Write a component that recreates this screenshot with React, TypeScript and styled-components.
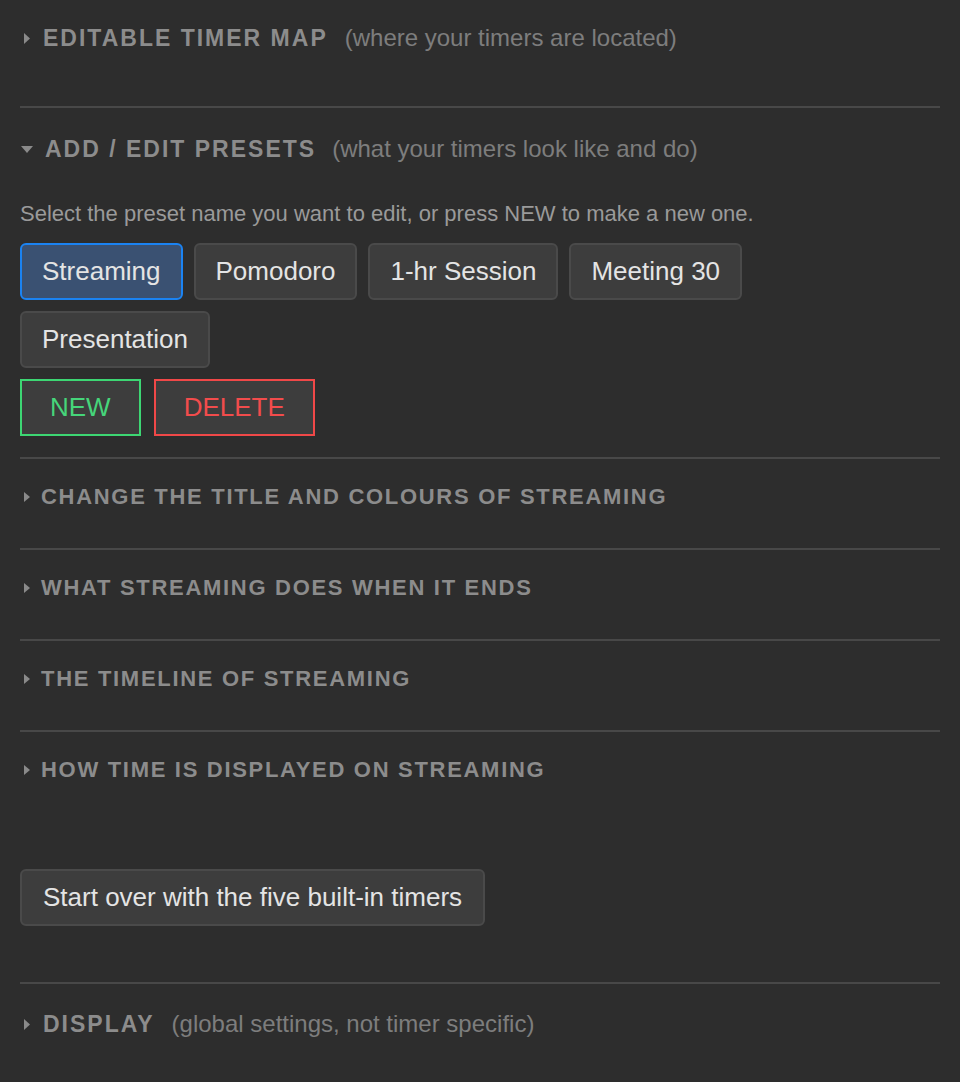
import React from "react";
import styled, { createGlobalStyle } from "styled-components";

const Global = createGlobalStyle`
  html, body { margin: 0; padding: 0; background: #2d2d2d; }
  body { font-family: "Liberation Sans", Arial, Helvetica, sans-serif; }
`;

const Page = styled.div`
  padding: 0 20px 40px 20px;
  background: #2d2d2d;
  min-height: 1082px;
  box-sizing: border-box;
`;

const Section = styled.section<{ $top: number; $bottom: number; $divider?: boolean }>`
  padding-top: ${(p) => p.$top}px;
  padding-bottom: ${(p) => p.$bottom}px;
  border-bottom: ${(p) => (p.$divider ? "2px solid #484848" : "none")};
`;

const Summary = styled.div<{ $gap: number }>`
  display: flex;
  align-items: center;
  height: 30px;
  color: #8a8a8a;
  gap: ${(p) => p.$gap}px;
`;

const Marker = styled.span<{ $open?: boolean }>`
  display: inline-flex;
  align-items: center;
  width: ${(p) => (p.$open ? 14 : 8)}px;
  margin-left: ${(p) => (p.$open ? 0 : 3)}px;
`;

const Title = styled.span<{ $sub?: boolean }>`
  font-weight: bold;
  font-size: ${(p) => (p.$sub ? 22 : 23)}px;
  letter-spacing: ${(p) => (p.$sub ? 1.7 : 2)}px;
  color: #8c8c8c;
  white-space: nowrap;
`;

const Subtitle = styled.span`
  font-size: 24px;
  color: #7d7d7d;
  margin-left: 5px;
  white-space: nowrap;
`;

const Body = styled.div`
  padding-top: 37px;
`;

const Hint = styled.p`
  margin: 0 0 16px 0;
  font-size: 22px;
  color: #9a9a9a;
  line-height: 26px;
  white-space: nowrap;
`;

const ButtonWrap = styled.div`
  display: flex;
  flex-wrap: wrap;
  gap: 11px;
  max-width: 760px;
`;

const PresetButton = styled.button<{ $active?: boolean }>`
  font-family: inherit;
  height: 57px;
  padding: 0 20px;
  font-size: 26px;
  border-radius: 6px;
  border: 2px solid ${(p) => (p.$active ? "#1b83f2" : "#4a4a4a")};
  background: ${(p) => (p.$active ? "#3a5172" : "#3d3d3d")};
  color: #e4e4e4;
  cursor: pointer;
`;

const ActionRow = styled.div`
  display: flex;
  gap: 13px;
  margin-top: 11px;
`;

const ActionButton = styled.button<{ $tone: string }>`
  font-family: inherit;
  height: 57px;
  padding: 0 28px;
  font-size: 26px;
  border-radius: 0;
  background: #3d3d3d;
  border: 2px solid ${(p) => (p.$tone === "green" ? "#3dd673" : "#f04848")};
  color: ${(p) => (p.$tone === "green" ? "#46d57a" : "#f24c4c")};
  cursor: pointer;
`;

const ResetArea = styled.div`
  padding-top: 84px;
  padding-bottom: 56px;
  border-bottom: 2px solid #484848;
`;

const ResetButton = styled(PresetButton)`
  padding: 0 21px;
`;

const Arrow = ({ open, sub }: { open?: boolean; sub?: boolean }) =>
  open ? (
    <svg width="14" height="9" viewBox="0 0 14 9">
      <path d="M1 1 L13 1 L7 8 Z" fill="#8a8a8a" />
    </svg>
  ) : (
    <svg width="8" height={sub ? 12 : 13} viewBox={`0 0 8 ${sub ? 12 : 13}`}>
      <path d={sub ? "M1 1 L7 6 L1 11 Z" : "M1 1 L7 6.5 L1 12 Z"} fill="#8a8a8a" />
    </svg>
  );

const Header = ({
  title,
  subtitle,
  open,
  sub,
}: {
  title: string;
  subtitle?: string;
  open?: boolean;
  sub?: boolean;
}) => (
  <Summary $gap={open ? 11 : sub ? 10 : 12}>
    <Marker $open={open}>
      <Arrow open={open} sub={sub} />
    </Marker>
    <Title $sub={sub}>{title}</Title>
    {subtitle && <Subtitle>{subtitle}</Subtitle>}
  </Summary>
);

const presets = ["Streaming", "Pomodoro", "1-hr Session", "Meeting 30", "Presentation"];
const subSections = [
  "CHANGE THE TITLE AND COLOURS OF STREAMING",
  "WHAT STREAMING DOES WHEN IT ENDS",
  "THE TIMELINE OF STREAMING",
  "HOW TIME IS DISPLAYED ON STREAMING",
];

export default function App() {
  return (
    <>
      <Global />
      <Page>
        <Section $top={23} $bottom={53} $divider>
          <Header title="EDITABLE TIMER MAP" subtitle="(where your timers are located)" />
        </Section>
        <Section $top={26} $bottom={21} $divider>
          <Header title="ADD / EDIT PRESETS" subtitle="(what your timers look like and do)" open />
          <Body>
            <Hint>Select the preset name you want to edit, or press NEW to make a new one.</Hint>
            <ButtonWrap>
              {presets.map((p, i) => (
                <PresetButton key={p} $active={i === 0}>
                  {p}
                </PresetButton>
              ))}
            </ButtonWrap>
            <ActionRow>
              <ActionButton $tone="green">NEW</ActionButton>
              <ActionButton $tone="red">DELETE</ActionButton>
            </ActionRow>
          </Body>
        </Section>
        {subSections.map((s, i) => (
          <Section
            key={s}
            $top={23}
            $bottom={i === subSections.length - 1 ? 0 : 36}
            $divider={i !== subSections.length - 1}
          >
            <Header title={s} sub />
          </Section>
        ))}
        <ResetArea>
          <ResetButton>Start over with the five built-in timers</ResetButton>
        </ResetArea>
        <Section $top={25} $bottom={20}>
          <Header title="DISPLAY" subtitle="(global settings, not timer specific)" />
        </Section>
      </Page>
    </>
  );
}
